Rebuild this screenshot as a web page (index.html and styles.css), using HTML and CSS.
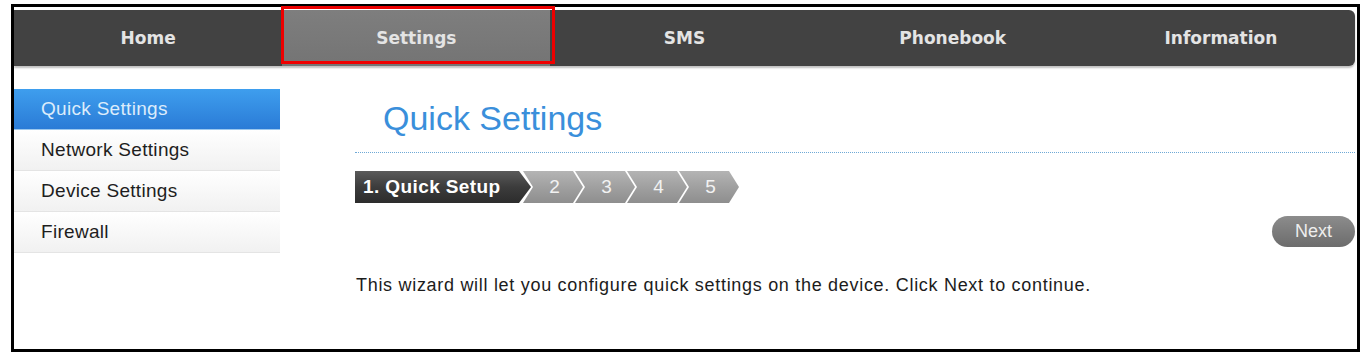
FILE: index.html
```html
<!DOCTYPE html>
<html>
<head>
<meta charset="utf-8">
<link rel="stylesheet" href="styles.css">
</head>
<body>
<div class="frame">
  <nav class="nav">
    <div class="nav-item">Home</div>
    <div class="nav-item active">Settings<span class="mark"></span></div>
    <div class="nav-item">SMS</div>
    <div class="nav-item">Phonebook</div>
    <div class="nav-item">Information</div>
  </nav>
  <div class="content">
    <ul class="side">
      <li class="side-item current">Quick Settings</li>
      <li class="side-item">Network Settings</li>
      <li class="side-item">Device Settings</li>
      <li class="side-item">Firewall</li>
    </ul>
    <div class="main">
      <h1 class="title">Quick Settings</h1>
      <div class="steps">
        <div class="step first">1. Quick Setup</div>
        <div class="step">2</div>
        <div class="step">3</div>
        <div class="step">4</div>
        <div class="step">5</div>
      </div>
      <div class="actions"><button class="btn">Next</button></div>
      <p class="desc">This wizard will let you configure quick settings on the device. Click Next to continue.</p>
    </div>
  </div>
</div>
</body>
</html>
```

FILE: styles.css
```css
html, body {
  margin: 0;
  padding: 0;
  background: #fff;
}
body {
  font-family: "Liberation Sans", Arial, sans-serif;
  padding: 4px 0 0 11px;
}
.frame {
  width: 1343px;
  height: 342px;
  border: 3px solid #000;
  box-sizing: content-box;
}
.nav {
  margin-top: 3px;
  width: 1341px;
  height: 56px;
  background: #424242;
  border-radius: 0 6px 6px 0;
  box-shadow: 0 2px 2px rgba(0,0,0,0.25);
  display: flex;
}
.nav-item {
  flex: 1;
  display: flex;
  align-items: center;
  justify-content: center;
  font-family: "DejaVu Sans", Verdana, sans-serif;
  font-weight: bold;
  font-size: 17px;
  color: #e4e4e4;
  position: relative;
}
.nav-item.active {
  background: linear-gradient(#7e7e7e, #747474);
}
.mark {
  position: absolute;
  left: -1px;
  right: -5px;
  top: -4px;
  bottom: 2px;
  border: 3px solid #ee0000;
  z-index: 2;
}
.content {
  display: flex;
  margin-top: 23px;
}
.side {
  list-style: none;
  margin: 0;
  padding: 0;
  width: 266px;
  flex: none;
}
.side-item {
  height: 40px;
  border-bottom: 1px solid #e4e4e4;
  background: linear-gradient(#ffffff, #f1f1f1);
  display: flex;
  align-items: center;
  padding-left: 27px;
  font-size: 19px;
  letter-spacing: 0.3px;
  color: #1e1e1e;
}
.side-item.current {
  background: linear-gradient(#3e9eee, #2a7bd6);
  color: #dcecfb;
  border-bottom-color: #9cc8ee;
}
.main {
  flex: 1;
  margin-left: 75px;
  margin-right: 2px;
}
.title {
  margin: 9px 0 0 0;
  padding: 0 0 14px 28px;
  font-weight: normal;
  font-size: 34px;
  line-height: 40px;
  color: #3a8fdb;
  border-bottom: 1px dotted #6fa9d6;
}
.steps {
  display: flex;
  margin-top: 18px;
  height: 32px;
}
.step {
  width: 60px;
  height: 32px;
  margin-left: -8px;
  display: flex;
  align-items: center;
  justify-content: center;
  padding-left: 3px;
  box-sizing: border-box;
  font-size: 19px;
  color: #f2f2f2;
  background: linear-gradient(#b4b4b4, #a0a0a0 50%, #8e8e8e);
  clip-path: polygon(0 0, calc(100% - 10px) 0, 100% 50%, calc(100% - 10px) 100%, 0 100%, 10px 50%);
}
.step.first {
  width: 176px;
  margin-left: 0;
  justify-content: flex-start;
  padding-left: 8px;
  font-weight: bold;
  letter-spacing: 0.4px;
  color: #fff;
  background: linear-gradient(#5a5a5a, #3c3c3c 50%, #2c2c2c);
  clip-path: polygon(0 0, calc(100% - 12px) 0, 100% 50%, calc(100% - 12px) 100%, 0 100%);
}
.actions {
  display: flex;
  justify-content: flex-end;
  margin-top: 13px;
}
.btn {
  width: 83px;
  height: 31px;
  border: none;
  border-radius: 16px;
  background: linear-gradient(#8c8c8c, #6c6c6c);
  color: #eeeeee;
  font-family: "Liberation Sans", Arial, sans-serif;
  font-size: 18px;
  padding: 0;
}
.desc {
  margin: 28px 0 0 1px;
  font-size: 18px;
  line-height: 20px;
  color: #1c1c1c;
  letter-spacing: 0.7px;
}
```
